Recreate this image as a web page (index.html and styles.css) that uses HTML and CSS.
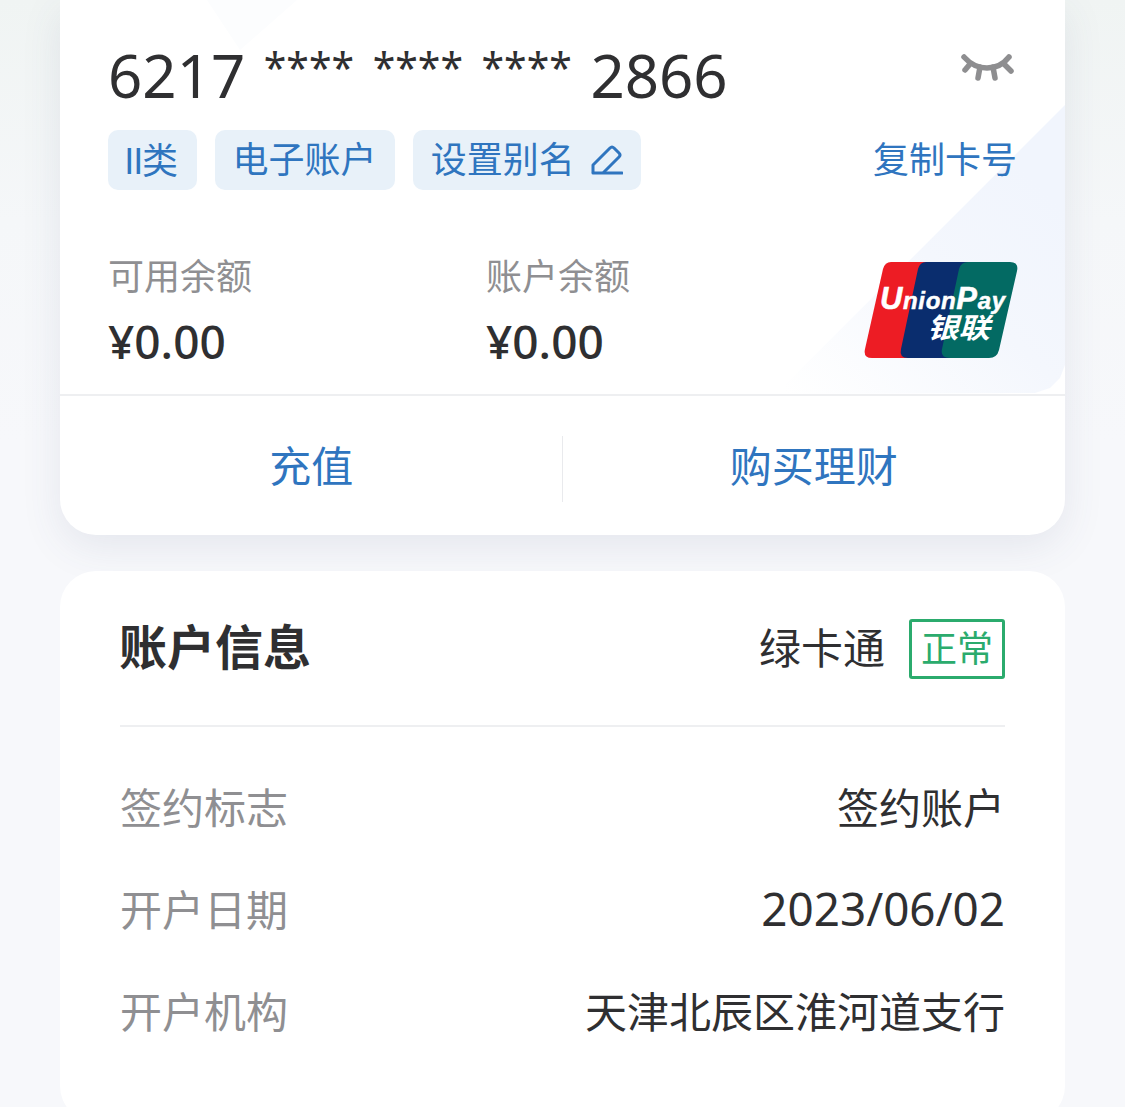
FILE: index.html
```html
<!DOCTYPE html>
<html lang="zh">
<head>
    <meta charset="utf-8">
    <link rel="stylesheet" href="styles.css">
</head>
<body>
    <div class="page">
        <div class="card bank-card">
            <div class="card-top">
                <div class="number-row">
                    <div class="card-number">
                        <span>6217</span>
                        <span class="mask">****</span>
                        <span class="mask">****</span>
                        <span class="mask">****</span>
                        <span>2866</span>
                    </div>
                    <svg class="eye" viewBox="0 0 56 30" fill="none" stroke="#8e8e90" stroke-width="5.5" stroke-linecap="round">
                        <path d="M3 5C11 14 18 16 26 16S41 14 48 5"/>
                        <path d="M9 12L4 18"/>
                        <path d="M19 15L17 26"/>
                        <path d="M32 15L34 26"/>
                        <path d="M43 12L50 19"/>
                    </svg>
                </div>
                <div class="tag-row">
                    <span class="tag tag-type">II类</span>
                    <span class="tag">电子账户</span>
                    <span class="tag">设置别名
                        <svg class="pen" viewBox="0 0 32 32" fill="none" stroke="#2f75bf" stroke-width="3" stroke-linejoin="round" stroke-linecap="round">
                            <path d="M2 28V21L19 4Q21 2 23 4L28 9Q30 11 28 13L13 28"/>
                            <path d="M2 29H31"/>
                        </svg>
                    </span>
                    <span class="copy">复制卡号</span>
                </div>
                <div class="balance-row">
                    <div class="balance">
                        <div class="balance-label">可用余额</div>
                        <div class="balance-value">¥0.00</div>
                    </div>
                    <div class="balance">
                        <div class="balance-label">账户余额</div>
                        <div class="balance-value">¥0.00</div>
                    </div>
                    <svg class="unionpay" viewBox="0 0 154 96">
                        <path fill="#ed1c24" d="M27 0H75L56 96H8Q-1 96 1 87L19 7Q21 0 27 0Z"/>
                        <path fill="#0a2d6e" d="M62 0H112Q120 0 118 8L102 88Q100 96 92 96H44Q35 96 37 87L54 7Q56 0 62 0Z"/>
                        <path fill="#036a63" d="M104 0H146Q155 0 153 9L135 88Q133 96 125 96H86Q76 96 78 87L95 7Q97 0 104 0Z"/>
                        <text class="up-latin" x="16" y="47" textLength="125" lengthAdjust="spacing"><tspan class="up-big">U</tspan>nion<tspan class="up-big">P</tspan>ay</text>
                        <text class="up-cjk" x="63" y="76" textLength="63" lengthAdjust="spacingAndGlyphs">银联</text>
                    </svg>
                </div>
            </div>
            <div class="actions">
                <div class="action">充值</div>
                <div class="action-line"></div>
                <div class="action">购买理财</div>
            </div>
        </div>

        <div class="card info-card">
            <div class="info-head">
                <div class="info-title">账户信息</div>
                <div class="info-type">绿卡通</div>
                <div class="status">正常</div>
            </div>
            <div class="info-rows">
                <div class="info-row">
                    <span class="info-label">签约标志</span>
                    <span class="info-value">签约账户</span>
                </div>
                <div class="info-row">
                    <span class="info-label">开户日期</span>
                    <span class="info-value date">2023/06/02</span>
                </div>
                <div class="info-row">
                    <span class="info-label">开户机构</span>
                    <span class="info-value">天津北辰区淮河道支行</span>
                </div>
            </div>
        </div>
    </div>
</body>
</html>
```

FILE: styles.css
```css
html, body {
    margin: 0;
    padding: 0;
    height: 100%;
    overflow: hidden;
}

body {
    background: linear-gradient(180deg, #f0f4f3 0%, #f5f7f9 20%, #f7f8fb 40%);
    color: #2f2f31;
    font-family: "Noto Sans", "Noto Sans CJK SC", sans-serif;
}

.page {
    display: flex;
    flex-direction: column;
    gap: 36px;
    padding: 0 60px;
}

.card {
    background: #ffffff;
    border-radius: 0 0 36px 36px;
}

.bank-card {
    height: 535px;
    overflow: hidden;
    box-sizing: border-box;
    box-shadow: 0 12px 40px rgba(70, 80, 120, 0.1);
}

.card-top {
    position: relative;
    height: 396px;
    box-sizing: border-box;
    padding: 44px 48px 0;
    border-bottom: 2px solid #eeeff1;
}

/* pale diagonal panels behind the card */
.card-top::before {
    content: '';
    position: absolute;
    inset: 0;
    background: linear-gradient(45deg, #ffffff 52%, #f4f7fd 72%, #f1f5fd 85%);
    clip-path: polygon(716px 394px, 1005px 105px, 1005px 365px, 1000px 378px, 990px 388px, 975px 393px);
}

.card-top::after {
    content: '';
    position: absolute;
    inset: 0;
    background: #fcfdfe;
    clip-path: polygon(147px 0, 237px 0, 180px 50px);
}

.card-top > * {
    position: relative;
    z-index: 1;
}

.number-row {
    display: flex;
    justify-content: space-between;
    height: 66px;
}

.card-number {
    display: flex;
    gap: 18.5px;
    font-size: 60px;
    line-height: 66px;
    margin-top: -2px;
}

.mask {
    font-size: 41px;
    line-height: 50px;
}

.eye {
    width: 56px;
    height: 30px;
    margin-top: 8px;
}

.tag-row {
    display: flex;
    align-items: center;
    gap: 18px;
    margin-top: 20px;
}

.tag {
    display: flex;
    align-items: center;
    gap: 16px;
    height: 60px;
    padding: 0 18px;
    border-radius: 10px;
    background: #e8f1f9;
    color: #2f75bf;
    font-size: 36px;
    line-height: 56px;
}

.tag-type {
    box-sizing: border-box;
    padding: 0 20px 5px 16px;
    font-family: "Noto Sans CJK SC", sans-serif;
    letter-spacing: -1.5px;
}

.pen {
    width: 32px;
    height: 32px;
}

.copy {
    margin-left: auto;
    color: #2f75bf;
    font-size: 36px;
    line-height: 56px;
}

.balance-row {
    display: flex;
    position: relative;
    margin-top: 62px;
}

.balance {
    width: 378px;
}

.balance-label {
    color: #8f8f92;
    font-size: 36px;
    line-height: 50px;
}

.balance-value {
    font-size: 46px;
    line-height: 62px;
    margin-top: 8px;
    font-weight: 500;
}

.unionpay {
    position: absolute;
    right: -1px;
    top: 10px;
    width: 154px;
    height: 96px;
}

.up-latin {
    fill: #ffffff;
    stroke: #ffffff;
    stroke-width: 0.5;
    font-family: "Liberation Sans", sans-serif;
    font-size: 24px;
    font-style: italic;
    font-weight: 700;
}

.up-big {
    font-size: 31px;
}

.up-cjk {
    fill: #ffffff;
    font-family: "Noto Sans CJK SC", sans-serif;
    font-size: 28px;
    font-style: italic;
    font-weight: 700;
}

.actions {
    display: flex;
    align-items: center;
    height: 139px;
}

.action {
    flex: 1;
    text-align: center;
    color: #2f75bf;
    font-size: 42px;
    line-height: 60px;
}

.action-line {
    width: 1px;
    height: 66px;
    margin: 6px 0 0 -1px;
    background: #e9eaed;
}

.info-card {
    border-radius: 36px;
    padding: 48px 60px 80px;
}

.info-head {
    display: flex;
    align-items: center;
    height: 60px;
    padding-bottom: 46px;
    border-bottom: 2px solid #eeeff1;
}

.info-title {
    flex: 1;
    font-size: 48px;
    font-weight: 700;
    line-height: 58px;
    margin: 0 0 4px -1px;
}

.info-type {
    font-size: 42px;
    line-height: 60px;
    margin: 0 24px 2px 0;
}

.status {
    box-sizing: border-box;
    width: 96px;
    height: 60px;
    border: 3px solid #2bab6d;
    border-radius: 3px;
    color: #2bab6d;
    font-size: 36px;
    line-height: 54px;
    text-align: center;
}

.info-rows {
    display: flex;
    flex-direction: column;
    gap: 42px;
    margin-top: 51px;
}

.info-row {
    display: flex;
    justify-content: space-between;
    font-size: 42px;
    line-height: 60px;
}

.info-label {
    color: #8f8f92;
}

.date {
    font-size: 45.8px;
    line-height: 56px;
}
```
